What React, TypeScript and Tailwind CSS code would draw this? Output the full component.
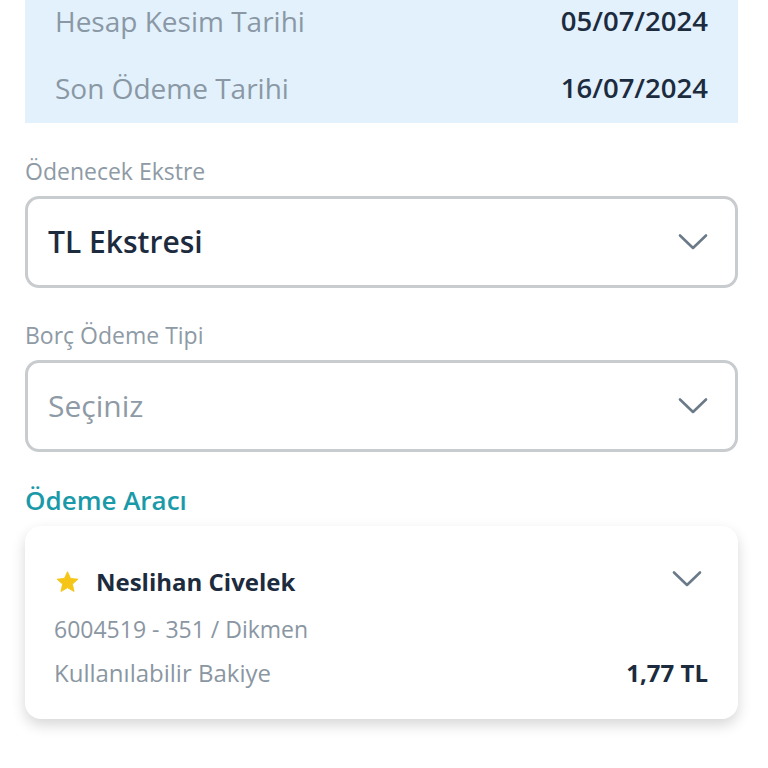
import React from "react";

function Chevron({ className = "" }: { className?: string }) {
  return (
    <svg className={className} width="30" height="18" viewBox="0 0 30 18" fill="none">
      <path d="M2 2.5 L15 15 L28 2.5" stroke="#6b7a88" strokeWidth="2.6" strokeLinecap="round" strokeLinejoin="round" />
    </svg>
  );
}

function Star() {
  return (
    <svg width="23" height="22" viewBox="0 0 24 23">
      <path d="M12 0.8 L15.2 7.8 L22.9 8.6 L17.1 13.7 L18.8 21.4 L12 17.4 L5.2 21.4 L6.9 13.7 L1.1 8.6 L8.8 7.8 Z" fill="#f5c518" strokeLinejoin="round" stroke="#f5c518" strokeWidth="1" />
    </svg>
  );
}

export default function App() {
  return (
    <div className="w-[768px] h-[768px] bg-white overflow-hidden" style={{ fontFamily: '"Open Sans", "Noto Sans", sans-serif' }}>
      <div className="mx-[25px] w-[713px] bg-[#e3f1fc] h-[123px] flex flex-col px-[30px] pt-0">
        <div className="flex justify-between items-center h-[42px]">
          <span className="text-[28px] text-[#8a98a5]">Hesap Kesim Tarihi</span>
          <span className="text-[27.5px] font-semibold text-[#1c2b3e]">05/07/2024</span>
        </div>
        <div className="flex justify-between items-center h-[46px] mt-[23px]">
          <span className="text-[28px] text-[#8a98a5]">Son Ödeme Tarihi</span>
          <span className="text-[27.5px] font-semibold text-[#1c2b3e]">16/07/2024</span>
        </div>
      </div>

      <div className="mx-[25px] w-[713px] mt-[32px]">
        <div className="text-[23px] text-[#8e9aa5] leading-[32px]">Ödenecek Ekstre</div>
        <div className="mt-[9px] h-[92px] border-[3px] border-[#c9cccf] rounded-[14px] flex items-center justify-between pl-[20px] pr-[27px]">
          <span className="text-[30px] font-semibold text-[#1c2b3e] -mt-[2px]">TL Ekstresi</span>
          <Chevron />
        </div>

        <div className="mt-[31px] text-[23px] text-[#8e9aa5] leading-[32px]">Borç Ödeme Tipi</div>
        <div className="mt-[9px] h-[92px] border-[3px] border-[#c9cccf] rounded-[14px] flex items-center justify-between pl-[20px] pr-[27px]">
          <span className="text-[30px] text-[#8e9aa5] -mt-[2px]">Seçiniz</span>
          <Chevron />
        </div>

        <div className="mt-[30px] text-[26px] font-semibold text-[#1a9aa8] leading-[36px]">Ödeme Aracı</div>

        <div className="mt-[8px] h-[193px] bg-white rounded-[16px] shadow-[0_6px_14px_rgba(0,0,0,0.16)] pl-[31px] pr-[30px] pt-[38px]">
          <div className="flex items-center justify-between">
            <div className="flex items-center gap-[17px]">
              <Star />
              <span className="text-[24px] font-bold text-[#1c2b3e]">Neslihan Civelek</span>
            </div>
            <Chevron className="-mt-[6px] mr-[6px]" />
          </div>
          <div className="mt-[12px] -ml-[2px] text-[23px] text-[#8a96a2]">6004519 - 351 / Dikmen</div>
          <div className="mt-[8px] -ml-[2px] flex justify-between items-center">
            <span className="text-[24px] text-[#8a96a2]">Kullanılabilir Bakiye</span>
            <span className="text-[24px] font-bold text-[#1c2b3e]">1,77 TL</span>
          </div>
        </div>
      </div>
    </div>
  );
}
